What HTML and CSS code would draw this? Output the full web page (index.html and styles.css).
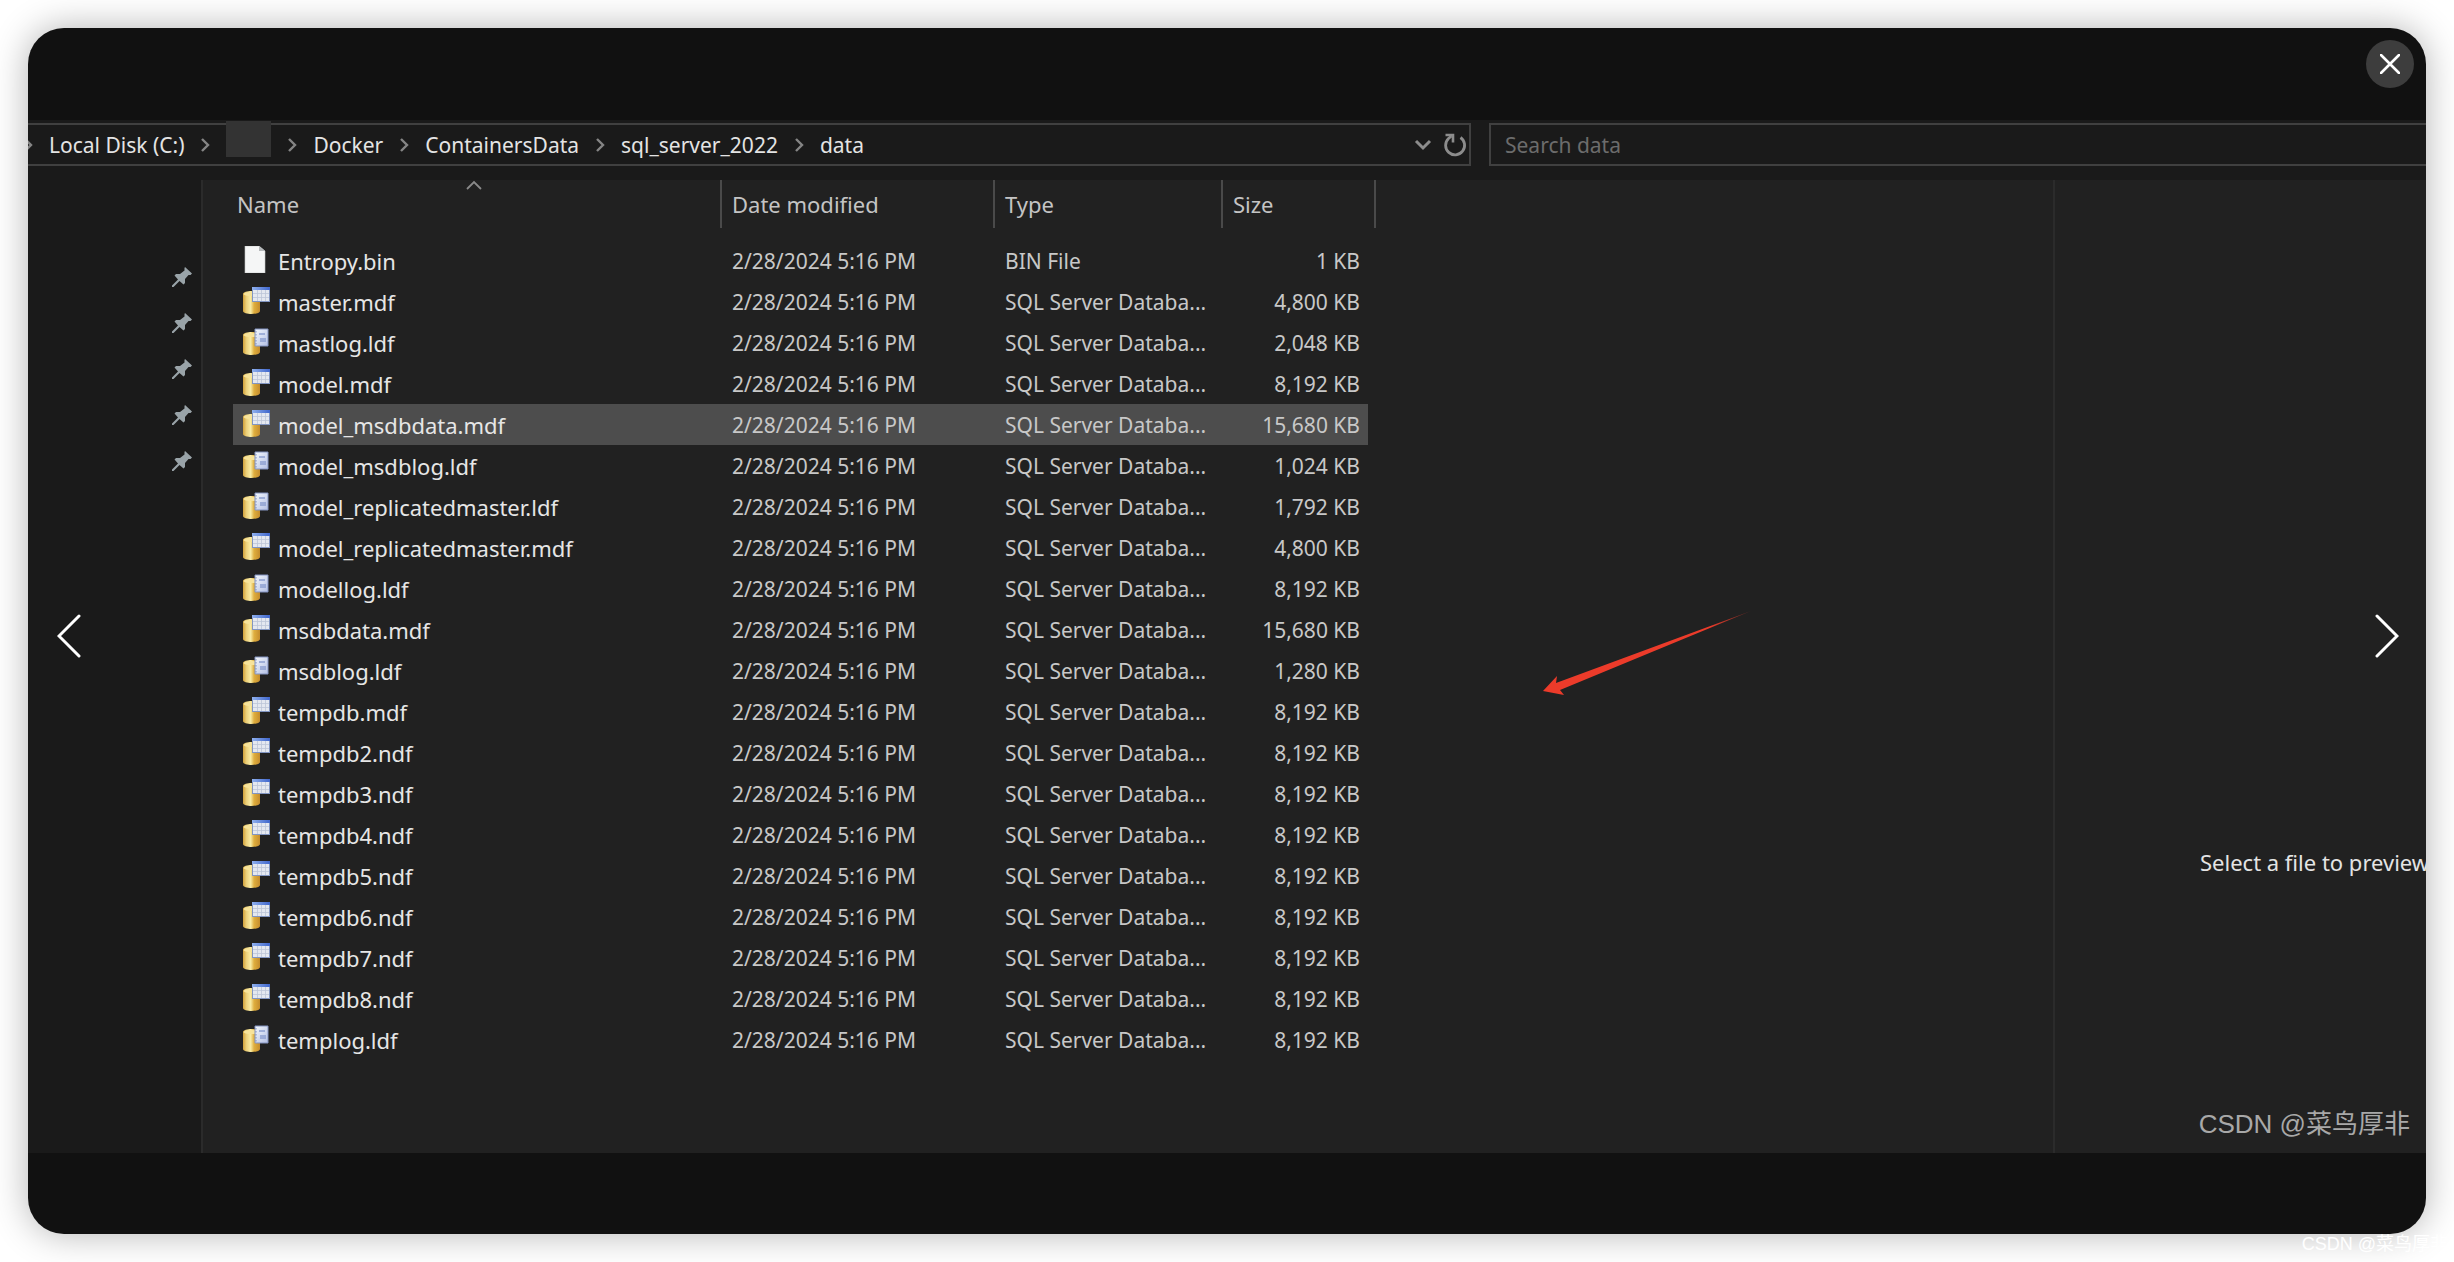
FILE: index.html
```html
<!DOCTYPE html>
<html lang="en">
<head>
<meta charset="utf-8">
<title>data</title>
<link rel="stylesheet" href="styles.css">
</head>
<body>
<svg class="sprite" aria-hidden="true">
  <defs>
    <linearGradient id="gold" x1="0" x2="1" y1="0" y2="0">
      <stop offset="0" stop-color="#d0a03a"/>
      <stop offset=".2" stop-color="#ecd07a"/>
      <stop offset=".45" stop-color="#f8eba4"/>
      <stop offset=".65" stop-color="#dfae3e"/>
      <stop offset="1" stop-color="#c48c2c"/>
    </linearGradient>
    <linearGradient id="tablehead" x1="0" x2="1" y1="0" y2="0">
      <stop offset="0" stop-color="#8fb0ee"/>
      <stop offset="1" stop-color="#3f66cc"/>
    </linearGradient>
    <linearGradient id="page" x1="0" x2="1" y1="0" y2="1">
      <stop offset="0" stop-color="#f4f8fd"/>
      <stop offset="1" stop-color="#b4c0e4"/>
    </linearGradient>
    <linearGradient id="tail" x1="1" x2="0" y1="0" y2="0">
      <stop offset="0" stop-color="#ec3b2a" stop-opacity=".3"/>
      <stop offset=".2" stop-color="#ec3b2a"/>
    </linearGradient>
  </defs>
  <symbol id="file" viewBox="0 0 27 27">
    <path d="M2 0h14l6 5v22H2z" fill="#f5f6f6" stroke="#c4c6c8" stroke-width=".6"/>
    <path d="M16 0v5h6z" fill="#b5b8ba"/>
  </symbol>
  <symbol id="mdf" viewBox="0 0 27 27">
    <path d="M0 7c0-4 17-4 17 0v17c0 4-17 4-17 0z" fill="url(#gold)"/>
    <ellipse cx="8.500" cy="7" rx="8" ry="2" fill="#f7e39a"/>
    <path d="M9 0h18v15H9z" fill="#8296c2"/>
    <path d="M10 1h16v13H10z" fill="#e4e8f0"/>
    <path d="M9 0h18v3H9z" fill="url(#tablehead)"/>
    <path d="M10 6.500h16M10 10.500h16M14.500 3v11M18.500 3v11M22.500 3v11" stroke="#bcc5d8" stroke-width=".8"/>
  </symbol>
  <symbol id="ldf" viewBox="0 0 27 27">
    <path d="M0 7c0-4 17-4 17 0v17c0 4-17 4-17 0z" fill="url(#gold)"/>
    <ellipse cx="8.500" cy="7" rx="8" ry="2" fill="#f7e39a"/>
    <path d="M12 1h13v17H12z" fill="url(#page)" stroke="#8393c0"/>
    <path d="M16 6h6M17 11h6M17 13h6" stroke="#8c9fd0" stroke-width="1.500"/>
    <path d="M13 3v14" stroke="#7f8fbb" stroke-dasharray="1.500 1.500"/>
  </symbol>
  <symbol id="pin" viewBox="0 0 20 20">
    <path d="M13 0l7 6.500-1.500 1.500h-2l-3.500 4v4l-1.500 1.500L7.500 14 1.500 20 0 20 0 18.500 6 12.500 2.500 8.500 4 7h4l4.500-3.500V1z" fill="#99a3a8"/>
  </symbol>
  <symbol id="sep" viewBox="0 0 10 14">
    <path d="M2 1l6 6-6 6" fill="none" stroke="#858585" stroke-width="2.400"/>
  </symbol>
</svg>

<main class="viewer">
  <header class="viewer-top">
    <button class="close" aria-label="Close">
      <svg viewBox="0 0 20 20" width="20" height="20"><path d="M1 1l18 18M19 1L1 19" stroke="#fff" stroke-width="2.600" stroke-linecap="round"/></svg>
    </button>
  </header>

  <section class="window">
    <div class="toolbar">
      <nav class="address" aria-label="Path">
        <svg class="sep"><use href="#sep"/></svg>
        <a href="#">Local Disk (C:)</a>
        <svg class="sep"><use href="#sep"/></svg>
        <span class="redacted"></span>
        <svg class="sep"><use href="#sep"/></svg>
        <a href="#">Docker</a>
        <svg class="sep"><use href="#sep"/></svg>
        <a href="#">ContainersData</a>
        <svg class="sep"><use href="#sep"/></svg>
        <a href="#">sql_server_2022</a>
        <svg class="sep"><use href="#sep"/></svg>
        <a href="#">data</a>
        <button class="tool history" aria-label="Previous locations">
          <svg viewBox="0 0 18 12" width="18" height="12"><path d="M2 2l7 7 7-7" fill="none" stroke="#8c8c8c" stroke-width="3"/></svg>
        </button>
        <button class="tool refresh" aria-label="Refresh">
          <svg viewBox="0 0 24 24" width="24" height="24"><path d="M17.500 4.500A9.500 9.500 0 1 1 5.500 5.500L8.500 3" fill="none" stroke="#8c8c8c" stroke-width="2.800"/><path d="M2.500 2h7.500v7.500" fill="none" stroke="#8c8c8c" stroke-width="2.600"/></svg>
        </button>
      </nav>
      <input class="search" type="search" placeholder="Search data" aria-label="Search data">
    </div>

    <div class="panes">
      <aside class="sidebar">
        <svg class="pin"><use href="#pin"/></svg>
        <svg class="pin"><use href="#pin"/></svg>
        <svg class="pin"><use href="#pin"/></svg>
        <svg class="pin"><use href="#pin"/></svg>
        <svg class="pin"><use href="#pin"/></svg>
      </aside>

      <div class="files">
        <table>
          <colgroup><col class="c-name"><col class="c-date"><col class="c-type"><col class="c-size"></colgroup>
          <thead>
            <tr>
              <th>Name<svg class="sort" viewBox="0 0 16 10"><path d="M1 9l7-7 7 7" fill="none" stroke="#8a8a8a" stroke-width="1.800"/></svg></th>
              <th>Date modified</th><th>Type</th><th>Size</th>
            </tr>
          </thead>
          <tbody>
            <tr><td><svg class="icon"><use href="#file"/></svg>Entropy.bin</td><td>2/28/2024 5:16 PM</td><td>BIN File</td><td>1 KB</td></tr>
            <tr><td><svg class="icon"><use href="#mdf"/></svg>master.mdf</td><td>2/28/2024 5:16 PM</td><td>SQL Server Databa...</td><td>4,800 KB</td></tr>
            <tr><td><svg class="icon"><use href="#ldf"/></svg>mastlog.ldf</td><td>2/28/2024 5:16 PM</td><td>SQL Server Databa...</td><td>2,048 KB</td></tr>
            <tr><td><svg class="icon"><use href="#mdf"/></svg>model.mdf</td><td>2/28/2024 5:16 PM</td><td>SQL Server Databa...</td><td>8,192 KB</td></tr>
            <tr class="hover"><td><svg class="icon"><use href="#mdf"/></svg>model_msdbdata.mdf</td><td>2/28/2024 5:16 PM</td><td>SQL Server Databa...</td><td>15,680 KB</td></tr>
            <tr><td><svg class="icon"><use href="#ldf"/></svg>model_msdblog.ldf</td><td>2/28/2024 5:16 PM</td><td>SQL Server Databa...</td><td>1,024 KB</td></tr>
            <tr><td><svg class="icon"><use href="#ldf"/></svg>model_replicatedmaster.ldf</td><td>2/28/2024 5:16 PM</td><td>SQL Server Databa...</td><td>1,792 KB</td></tr>
            <tr><td><svg class="icon"><use href="#mdf"/></svg>model_replicatedmaster.mdf</td><td>2/28/2024 5:16 PM</td><td>SQL Server Databa...</td><td>4,800 KB</td></tr>
            <tr><td><svg class="icon"><use href="#ldf"/></svg>modellog.ldf</td><td>2/28/2024 5:16 PM</td><td>SQL Server Databa...</td><td>8,192 KB</td></tr>
            <tr><td><svg class="icon"><use href="#mdf"/></svg>msdbdata.mdf</td><td>2/28/2024 5:16 PM</td><td>SQL Server Databa...</td><td>15,680 KB</td></tr>
            <tr><td><svg class="icon"><use href="#ldf"/></svg>msdblog.ldf</td><td>2/28/2024 5:16 PM</td><td>SQL Server Databa...</td><td>1,280 KB</td></tr>
            <tr><td><svg class="icon"><use href="#mdf"/></svg>tempdb.mdf</td><td>2/28/2024 5:16 PM</td><td>SQL Server Databa...</td><td>8,192 KB</td></tr>
            <tr><td><svg class="icon"><use href="#mdf"/></svg>tempdb2.ndf</td><td>2/28/2024 5:16 PM</td><td>SQL Server Databa...</td><td>8,192 KB</td></tr>
            <tr><td><svg class="icon"><use href="#mdf"/></svg>tempdb3.ndf</td><td>2/28/2024 5:16 PM</td><td>SQL Server Databa...</td><td>8,192 KB</td></tr>
            <tr><td><svg class="icon"><use href="#mdf"/></svg>tempdb4.ndf</td><td>2/28/2024 5:16 PM</td><td>SQL Server Databa...</td><td>8,192 KB</td></tr>
            <tr><td><svg class="icon"><use href="#mdf"/></svg>tempdb5.ndf</td><td>2/28/2024 5:16 PM</td><td>SQL Server Databa...</td><td>8,192 KB</td></tr>
            <tr><td><svg class="icon"><use href="#mdf"/></svg>tempdb6.ndf</td><td>2/28/2024 5:16 PM</td><td>SQL Server Databa...</td><td>8,192 KB</td></tr>
            <tr><td><svg class="icon"><use href="#mdf"/></svg>tempdb7.ndf</td><td>2/28/2024 5:16 PM</td><td>SQL Server Databa...</td><td>8,192 KB</td></tr>
            <tr><td><svg class="icon"><use href="#mdf"/></svg>tempdb8.ndf</td><td>2/28/2024 5:16 PM</td><td>SQL Server Databa...</td><td>8,192 KB</td></tr>
            <tr><td><svg class="icon"><use href="#ldf"/></svg>templog.ldf</td><td>2/28/2024 5:16 PM</td><td>SQL Server Databa...</td><td>8,192 KB</td></tr>
          </tbody>
        </table>
        <svg class="arrow" viewBox="0 0 210 88" aria-hidden="true">
          <path d="M0 82L14 67 13 74 208 2 17 81 21 86z" fill="url(#tail)"/>
        </svg>
      </div>

      <aside class="preview"><p>Select a file to preview.</p></aside>
    </div>
    <p class="watermark">CSDN @菜鸟厚非</p>
  </section>

  <footer class="viewer-bottom"></footer>

  <button class="step prev" aria-label="Previous"><svg viewBox="0 0 24 44" width="24" height="44"><path d="M22 2L2 22l20 20" fill="none" stroke="#fff" stroke-width="3" stroke-linecap="round"/></svg></button>
  <button class="step next" aria-label="Next"><svg viewBox="0 0 24 44" width="24" height="44"><path d="M2 2l20 20L2 42" fill="none" stroke="#fff" stroke-width="3" stroke-linecap="round"/></svg></button>
</main>
<p class="page-mark">CSDN @菜鸟厚非</p>
</body>
</html>
```
FILE: styles.css
```css
* { box-sizing: border-box; }

body {
  margin: 0;
  min-height: 100vh;
  padding: 28px;
  display: flex;
  position: relative;
  overflow: hidden;
  background: #fff;
  color: #dedede;
  font: 21px/30px "Noto Sans", "Noto Sans CJK SC", sans-serif;
}

p { margin: 0; }
a { color: inherit; text-decoration: none; }
button { padding: 0; border: 0; background: none; cursor: pointer; }
button svg { display: block; }
.sprite { position: absolute; width: 0; height: 0; }

/* Lightbox */
.viewer {
  flex: 1;
  min-width: 0;
  display: flex;
  flex-direction: column;
  position: relative;
  overflow: hidden;
  border-radius: 36px;
  background: #111;
  box-shadow: 0 0 36px rgba(0, 0, 0, .3);
}
.viewer-top {
  height: 92px;
  padding: 12px 12px 0;
  display: flex;
  justify-content: flex-end;
}
.close {
  width: 48px;
  height: 48px;
  display: grid;
  place-items: center;
  border-radius: 50%;
  background: #3d3d3d;
}
.viewer-bottom { height: 81px; }
.step { position: absolute; top: 586px; }
.prev { left: 29px; }
.next { right: 27px; }

/* Explorer window */
.window {
  flex: 1;
  display: flex;
  flex-direction: column;
  position: relative;
  background: #1a1a1a;
}
.toolbar {
  padding: 3px 0 14px;
  display: flex;
  gap: 18px;
}
.address {
  flex: 0 0 1443px;
  height: 43px;
  display: flex;
  align-items: center;
  gap: 16px;
  border: solid #404040;
  border-width: 2px 2px 2px 0;
  color: #e4e4e4;
}
.sep { width: 10px; height: 14px; flex: none; }
.address > .sep:first-child { margin-left: -5px; }
.redacted {
  width: 45px;
  height: 36px;
  margin-top: -12px;
  background: #333;
}
.history { margin-left: auto; }
.refresh { padding-right: 2px; margin-left: -5px; }
.search {
  flex: 1;
  min-width: 0;
  height: 43px;
  padding: 0 14px;
  appearance: none;
  border: 2px solid #404040;
  border-right: 0;
  border-radius: 0;
  outline: 0;
  background: #1a1a1a;
  color: #e4e4e4;
  font: inherit;
}
.search::placeholder { color: #6c6c6c; opacity: 1; }

.panes { flex: 1; display: flex; }
.sidebar {
  width: 173px;
  padding: 87px 0 0;
  display: flex;
  flex-direction: column;
  gap: 26px;
}
.pin { width: 20px; height: 20px; margin-left: 144px; }

.files {
  flex: 1;
  min-width: 0;
  position: relative;
  padding-left: 30px;
  border-left: 2px solid #2b2b2b;
  background: #212121;
}
table { width: 1143px; table-layout: fixed; border-collapse: separate; border-spacing: 0; }
.c-name { width: 489px; }
.c-date { width: 273px; }
.c-type { width: 228px; }
.c-size { width: 153px; }
th {
  height: 48px;
  padding: 0 10px;
  position: relative;
  border-right: 2px solid #4a4a4a;
  color: #c4c4c4;
  font-size: 22px;
  font-weight: 400;
  text-align: left;
}
th:first-child { padding-left: 4px; }
.sort { position: absolute; top: 0; right: 238px; width: 16px; height: 10px; }
tbody::before { content: ""; display: block; height: 12px; }
td { height: 41px; padding: 0 10px; white-space: nowrap; color: #c8c8c8; }
td:first-child { color: #e6e6e6; font-size: 22px; }
td:last-child { padding-right: 8px; border-right: 8px solid transparent; background-clip: padding-box; text-align: right; }
.icon { width: 27px; height: 27px; margin-right: 8px; vertical-align: -3px; }
.hover td { background-color: #4d4d4d; }

.arrow { position: absolute; left: 1340px; top: 429px; width: 210px; height: 88px; }

.preview {
  flex: 0 0 373px;
  padding-left: 145px;
  display: flex;
  align-items: center;
  overflow: hidden;
  border-left: 2px solid #2b2b2b;
  background: #212121;
  color: #e4e4e4;
  font-size: 22px;
  white-space: nowrap;
}
.preview p { padding-top: 390px; }

.watermark {
  position: absolute;
  right: 16px;
  bottom: 11px;
  color: #a8a8a8;
  font: 26px/36px "Liberation Sans", "Noto Sans CJK SC", sans-serif;
}
.page-mark {
  position: absolute;
  right: 6px;
  bottom: 6px;
  color: #fff;
  font: 18px/24px "Liberation Sans", "Noto Sans CJK SC", sans-serif;
}
```
